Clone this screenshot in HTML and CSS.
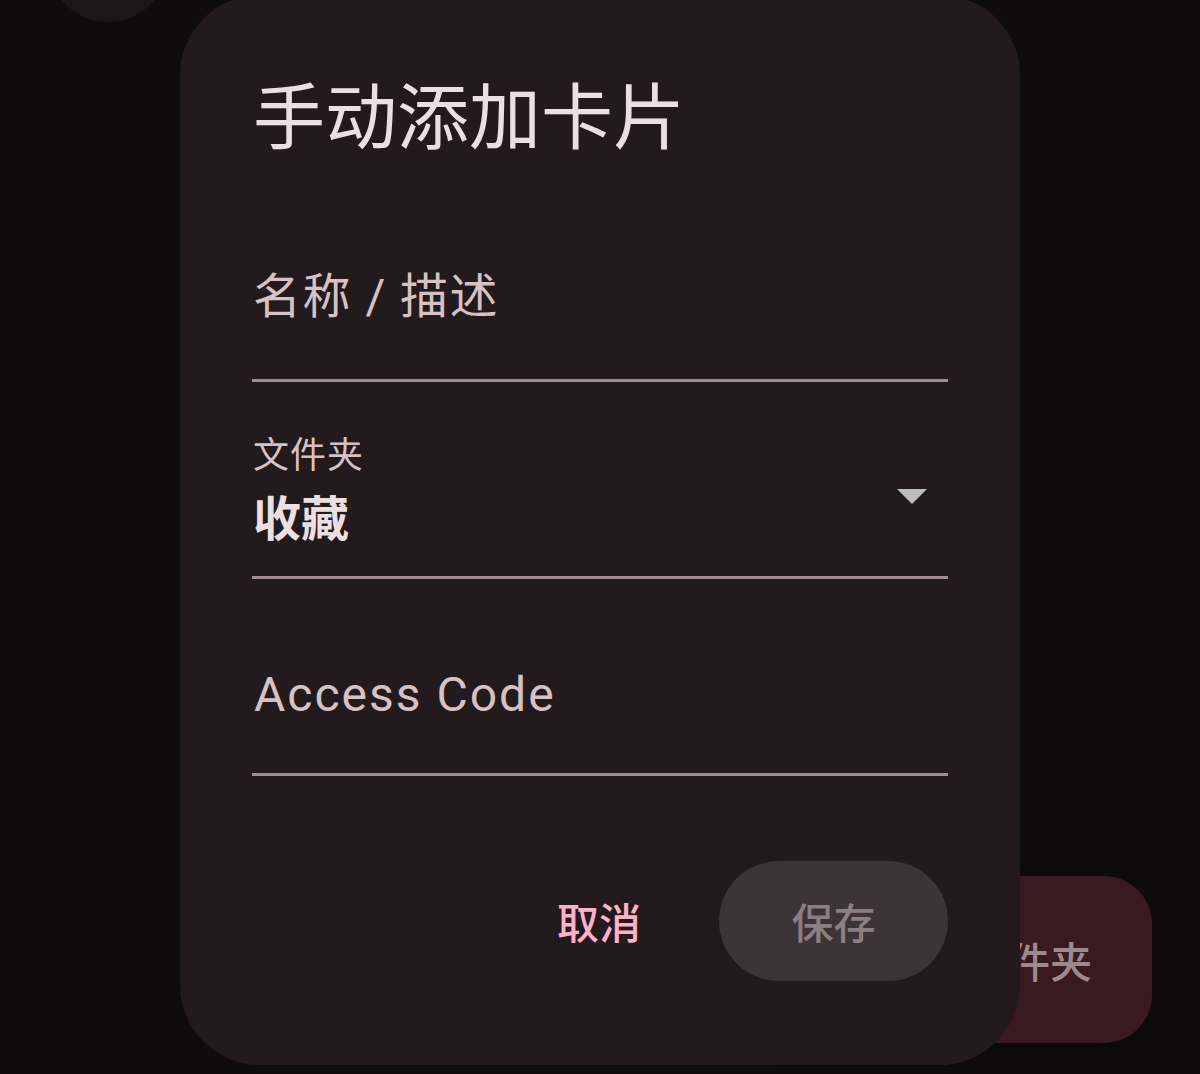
FILE: index.html
```html
<!DOCTYPE html>
<html lang="zh-CN">
<head>
<meta charset="utf-8">
<title>手动添加卡片</title>
<link rel="stylesheet" href="styles.css">
</head>
<body>
<div class="screen">
  <div class="bg-circle"></div>
  <button class="fab">
    <svg class="fab-icon" viewBox="0 0 24 24" width="72" height="72"><path d="M20 6h-8l-2-2H4c-1.1 0-2 .9-2 2v12c0 1.1.9 2 2 2h16c1.1 0 2-.9 2-2V8c0-1.1-.9-2-2-2zm-1 8h-3v3h-2v-3h-3v-2h3V9h2v3h3v2z" fill="currentColor"/></svg>
    <span class="fab-label">新建文件夹</span>
  </button>

  <div class="dialog" role="dialog">
    <h1 class="title">手动添加卡片</h1>

    <div class="field">
      <span class="hint">名称 / 描述</span>
    </div>

    <div class="field field-select">
      <div class="select-text">
        <span class="label">文件夹</span>
        <span class="value">收藏</span>
      </div>
      <svg class="drop-icon" viewBox="0 0 24 24" width="72" height="72"><path d="M7 10l5 5 5-5z" fill="currentColor"/></svg>
    </div>

    <div class="field">
      <span class="hint latin">Access Code</span>
    </div>

    <div class="actions">
      <button class="btn-text">取消</button>
      <button class="btn-filled" disabled>保存</button>
    </div>
  </div>
</div>
</body>
</html>
```

FILE: styles.css
```css
* { box-sizing: border-box; }

html, body {
  margin: 0;
  padding: 0;
  background: #0f0c0d;
}

body {
  font-family: "Roboto", "Noto Sans CJK SC", sans-serif;
  width: 1200px;
  height: 1074px;
  overflow: hidden;
}

.screen {
  position: relative;
  width: 1200px;
  height: 1074px;
  overflow: hidden;
  background: #0f0c0d;
}

.bg-circle {
  position: absolute;
  left: 48px;
  top: -98px;
  width: 120px;
  height: 120px;
  border-radius: 50%;
  background: #1b1718;
}

.fab {
  position: absolute;
  right: 48px;
  top: 876px;
  height: 167px;
  border: none;
  border-radius: 48px;
  background: #381a20;
  color: #9d8a8e;
  display: flex;
  align-items: center;
  gap: 24px;
  padding: 0 60px 0 48px;
  font-family: "Noto Sans CJK SC", sans-serif;
  font-size: 42px;
  font-weight: 500;
  white-space: nowrap;
  box-shadow: 0 6px 18px rgba(0, 0, 0, 0.35);
}

.fab-label { line-height: 60px; }

.fab-icon { flex: none; }

.dialog {
  position: absolute;
  left: 180px;
  top: -5px;
  width: 840px;
  height: 1070px;
  background: #221a1c;
  border-radius: 80px;
  padding: 69px 72px 0 72px;
  display: flex;
  flex-direction: column;
}

.title {
  margin: 0 0 54px 0;
  font-family: "Noto Sans CJK SC", sans-serif;
  font-weight: 400;
  font-size: 72px;
  line-height: 96px;
  height: 96px;
  color: #ecdfe1;
  padding-left: 1px;
}

.field {
  height: 168px;
  border-bottom: 3px solid #9e8c8f;
  display: flex;
  align-items: center;
  flex: none;
}

.field + .field { margin-top: 29px; }

.hint {
  font-size: 48px;
  line-height: 72px;
  letter-spacing: 1.5px;
  color: #d6c2c5;
  padding-left: 1px;
}

.hint.latin {
  font-family: "Roboto", sans-serif;
  letter-spacing: 2px;
  padding-left: 2px;
  padding-top: 8px;
}

.field-select {
  justify-content: space-between;
}

.select-text {
  display: flex;
  flex-direction: column;
  padding-left: 1px;
  margin-top: -8px;
}

.label {
  font-family: "Noto Sans CJK SC", sans-serif;
  font-size: 36px;
  line-height: 48px;
  color: #d6c2c5;
  letter-spacing: 1px;
}

.value {
  font-family: "Noto Sans CJK SC", sans-serif;
  font-size: 48px;
  line-height: 72px;
  margin-top: 3px;
  font-weight: 700;
  color: #ecdfe1;
}

.drop-icon {
  color: #bdbdbd;
  margin-top: 2px;
  flex: none;
}

.actions {
  margin-top: 85px;
  display: flex;
  justify-content: flex-end;
  align-items: center;
  gap: 42px;
}

.actions button {
  height: 120px;
  border: none;
  border-radius: 60px;
  font-family: "Noto Sans CJK SC", sans-serif;
  font-size: 42px;
  font-weight: 500;
  line-height: 60px;
}

.btn-text {
  background: transparent;
  color: #ffb1c8;
  padding: 0 36px;
}

.btn-filled {
  background: #3c3436;
  color: #8b7f81;
  padding: 0 72px;
  width: 229px;
}
```
